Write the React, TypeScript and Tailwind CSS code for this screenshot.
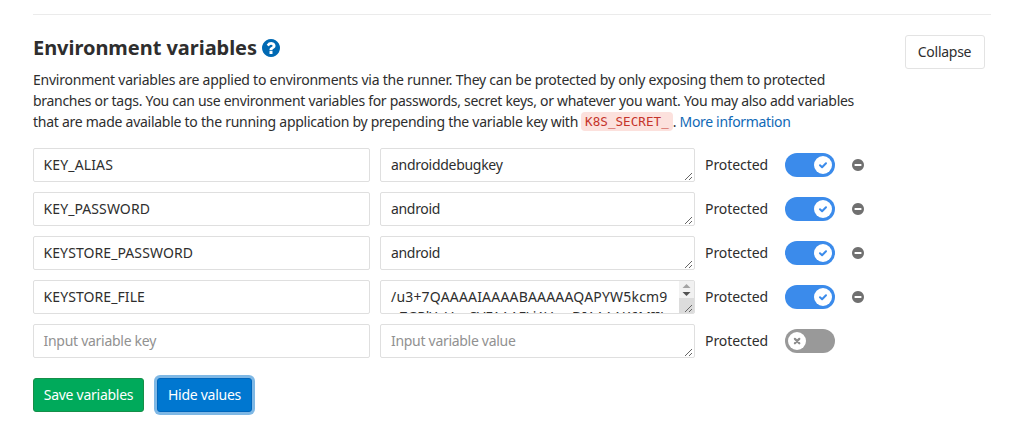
type Variable = {
  name: string;
  value: string;
  nameClass: string;
  valueClass: string;
  rest?: string;
  isNew?: boolean;
};

const variables: Variable[] = [
  { name: "KEY_ALIAS", value: "androiddebugkey", nameClass: "tracking-[0.139px]", valueClass: "tracking-[-0.295px]" },
  { name: "KEY_PASSWORD", value: "android", nameClass: "tracking-[0.09px]", valueClass: "tracking-[-0.33px]" },
  { name: "KEYSTORE_PASSWORD", value: "android", nameClass: "tracking-[0.086px]", valueClass: "tracking-[-0.33px]" },
  {
    name: "KEYSTORE_FILE",
    value: "/u3+7QAAAAIAAAABAAAAAQAPYW5kcm9",
    nameClass: "tracking-[0.089px]",
    valueClass: "tracking-[0.187px]",
    rest: "pZGRlYnVnaSVFAAAFLjAVwgDIAAAAK6MIIL",
  },
  {
    name: "Input variable key",
    value: "Input variable value",
    nameClass: "tracking-[-0.281px] text-[#919191]",
    valueClass: "tracking-[-0.298px] text-[#919191]",
    isNew: true,
  },
];

const disc =
  "M1664 896q0 209-103 385.5t-279.5 279.5-385.5 103-385.5-103-279.5-279.5-103-385.5 103-385.5 279.5-279.5 385.5-103 385.5 103 279.5 279.5 103 385.5z";

function HelpIcon() {
  return (
    <svg viewBox="128 128 1536 1536" className="h-[18px] w-[18px] fill-[#0069b3]">
      <path
        d={
          disc +
          "M1024 1376v-192q0-14-9-23t-23-9h-192q-14 0-23 9t-9 23v192q0 14 9 23t23 9h192q14 0 23-9t9-23zM1280 704q0-88-55.500-163t-138.500-116-170-41q-243 0-371 213-15 24 8 42l132 100q7 6 19 6 16 0 25-12 53-68 86-92 34-24 86-24 48 0 85.500 26t37.500 59q0 38-20 61t-68 45q-63 28-115.500 86.500t-52.500 125.500v36q0 14 9 23t23 9h192q14 0 23-9t9-23q0-19 21.500-49.500t54.500-49.500q32-18 49-28.500t46-35 44.500-48 28-60.500 12.500-81z"
        }
        fillRule="evenodd"
      />
    </svg>
  );
}

function MinusIcon() {
  return (
    <svg viewBox="128 128 1536 1536" className="h-3 w-3 fill-[#707070]">
      <path
        d={disc + "M1344 960v-128q0-26-19-45t-45-19h-768q-26 0-45 19t-19 45v128q0 26 19 45t45 19h768q26 0 45-19t19-45z"}
        fillRule="evenodd"
      />
    </svg>
  );
}

function Toggle({ on }: { on: boolean }) {
  return (
    <span
      className={
        on
          ? "ml-[17px] flex h-6 w-[50px] items-center justify-end rounded-full bg-[#3b8beb] px-[3px]"
          : "ml-[17px] flex h-6 w-[50px] items-center justify-start rounded-full bg-[#999] px-[3px]"
      }
    >
      <span className="flex h-[18px] w-[18px] items-center justify-center rounded-full bg-white">
        <svg viewBox="0 0 18 18" className="h-[18px] w-[18px] fill-none" strokeWidth="2">
          {on ? (
            <path d="M6 9.200 8.100 11.200 12 7.300" stroke="#3b8beb" strokeLinecap="round" strokeLinejoin="round" />
          ) : (
            <path d="M6.900 6.900 11.300 11.300M11.300 6.900 6.900 11.300" stroke="#8c8c8c" strokeWidth="2.200" strokeLinecap="round" />
          )}
        </svg>
      </span>
    </span>
  );
}

function ResizeGrip() {
  return (
    <svg viewBox="0 0 8 8" className="absolute right-px bottom-px h-2 w-2" shapeRendering="crispEdges">
      <path
        d="M0 7h1v1H0zM1 6h1v1H1zM2 5h1v1H2zM3 4h1v1H3zM4 3h1v1H4zM5 2h1v1H5zM6 1h1v1H6zM4 7h1v1H4zM5 6h1v1H5zM6 5h1v1H6z"
        fill="#666"
      />
    </svg>
  );
}

function ScrollBar() {
  return (
    <span className="absolute top-0 right-0 flex h-8 w-[15px] flex-col bg-[#f1f1f1]">
      <svg viewBox="0 0 15 17" className="h-[17px] w-[15px]">
        <path d="M7.500 3 11.500 7H3.500z" fill="#a3a3a3" />
        <path d="M3.500 11h8l-4 4z" fill="#505050" />
      </svg>
      <span className="h-[15px] bg-[#dcdcdc]" />
    </span>
  );
}

function VariableRow({ item }: { item: Variable }) {
  return (
    <div className="flex h-[34px] items-center">
      <div className="flex h-[34px] w-[337px] items-center rounded-[2px] border border-[#dfdfdf] px-[9.500px]">
        <span className={item.nameClass}>{item.name}</span>
      </div>
      <div className="relative ml-[10px] h-[34px] w-[315px] overflow-hidden rounded-[2px] border border-[#dfdfdf] px-[10px] pt-[6px] leading-5 whitespace-nowrap">
        <div className={item.valueClass}>{item.value}</div>
        {item.rest && <div className="tracking-[-0.15px]">{item.rest}</div>}
        {item.rest && <ScrollBar />}
        <ResizeGrip />
      </div>
      <span className="ml-[10px] w-[63px] tracking-[-0.075px]">Protected</span>
      <Toggle on={!item.isNew} />
      {!item.isNew && (
        <span className="ml-[16.500px]">
          <MinusIcon />
        </span>
      )}
    </div>
  );
}

export default function App() {
  return (
    <main className="h-[425px] w-[1019px] overflow-hidden bg-white pr-[28px] pl-[33px] pt-[14px] font-['Noto_Sans',sans-serif] text-sm text-[#2e2e2e]">
      <section className="border-t border-[#ebebeb]">
        <header className="flex h-[54px] items-start justify-between pt-5 pr-[6px]">
          <h2 className="flex items-center gap-[5px] text-[20px] leading-[26px] font-bold tracking-[-0.04px]">
            Environment variables
            <HelpIcon />
          </h2>
          <button className="h-[34px] w-20 rounded-[3px] border border-[#e3e3e3] pr-px tracking-[-0.263px]">Collapse</button>
        </header>
        <p className="leading-[21px] whitespace-nowrap">
          <span className="block tracking-[-0.236px]">
            Environment variables are applied to environments via the runner. They can be protected by only exposing them to protected
          </span>
          <span className="block tracking-[-0.293px]">
            branches or tags. You can use environment variables for passwords, secret keys, or whatever you want. You may also add variables
          </span>
          <span className="flex h-[21px] items-center">
            <span className="tracking-[-0.263px]">that are made available to the running application by prepending the variable key with</span>
            <code className="ml-[3px] h-[19px] rounded-[4px] bg-[#fce1dd] px-1 font-['DejaVu_Sans_Mono',monospace] text-[12.600px] leading-[20px] tracking-[0.030px] text-[#c5332a]">
              K8S_SECRET_
            </code>
            <span>.</span>
            <a className="ml-[3px] tracking-[-0.329px] text-[#1069b6]">More information</a>
          </span>
        </p>
        <div className="mt-4 flex flex-col gap-[10px]">
          {variables.map((item) => (
            <VariableRow key={item.name} item={item} />
          ))}
        </div>
        <div className="mt-5 flex gap-[13px] text-white">
          <button className="h-[34px] w-[111px] rounded-[3px] border border-[#168f48] bg-[#00aa5b] tracking-[-0.266px]">Save variables</button>
          <button className="h-[34px] w-[95px] rounded-[3px] border border-[#0066bc] bg-[#0077d0] tracking-[-0.269px] shadow-[0_0_0_3px_#7fb8e5]">
            Hide values
          </button>
        </div>
      </section>
    </main>
  );
}
